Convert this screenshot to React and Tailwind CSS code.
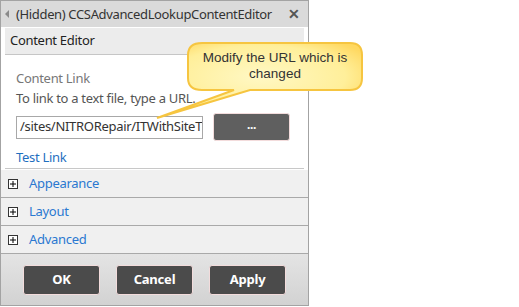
import React from "react";

export default function App() {
  const seg = { fontFamily: '"Noto Sans", "Open Sans", sans-serif' };
  return (
    <div className="relative w-[519px] h-[307px] bg-white overflow-hidden" style={seg}>
      <div className="w-[309px] h-[306px] border border-[#a3a3a3] flex flex-col bg-white">
        {/* title bar */}
        <div className="h-[26px] bg-[#dadada] flex items-center pl-[4px] pr-[8px] shrink-0">
          <span className="w-0 h-0 border-y-[4px] border-y-transparent border-r-[4px] border-r-[#8a8a8a] mr-[7px]" />
          <span className="text-[13px] text-[#333] tracking-[-0.35px] leading-none">(Hidden) CCSAdvancedLookupContentEditor</span>
          <span className="ml-auto text-[#555] text-[14px] font-bold leading-none">✕</span>
        </div>
        {/* body */}
        <div className="px-[4px] pt-[1px] pb-[1px] shrink-0">
          <div className="h-[27px] bg-[#ececec] border-b border-[#c6c6c6] flex items-center pl-[5px] text-[13px] text-[#222] tracking-[-0.3px]">
            Content Editor
          </div>
          <div className="pl-[11px] pt-[15px] border-b border-[#c8c8c8] h-[114px] tracking-[-0.3px]">
            <div className="text-[13px] text-[#777] leading-[17px]">Content Link</div>
            <div className="text-[13px] text-[#555] leading-[17px] mt-[3px]">To link to a text file, type a URL.</div>
            <div className="flex items-center mt-[6px]">
              <div className="w-[187px] h-[23px] border border-[#a8a8a8] flex items-center pl-[3px] text-[13px] text-[#333] overflow-hidden whitespace-nowrap">
                /sites/NITRORepair/ITWithSiteT
              </div>
              <div className="ml-[10px] w-[77px] h-[28px] rounded-[3px] border border-[#f3dcdc] bg-[#5f5f5f] flex items-center justify-center text-white text-[12px] font-bold leading-none pb-[4px]">
                ...
              </div>
            </div>
            <div className="mt-[8px] text-[13px] text-[#1f6fbf] leading-[17px]">Test Link</div>
          </div>
        </div>
        {/* accordion rows */}
        {["Appearance", "Layout", "Advanced"].map((t) => (
          <div
            key={t}
            className="h-[28px] bg-[#f0f0f0] border-b border-[#a9a9a9] flex items-center pl-[7px] shrink-0"
          >
            <span className="w-[10px] h-[10px] border border-[#333] bg-white flex items-center justify-center">
              <svg width="8" height="8" viewBox="0 0 8 8">
                <path d="M1 4H7M4 1V7" stroke="#000" strokeWidth="1" />
              </svg>
            </span>
            <span className="ml-[11px] text-[13px] text-[#2a78d0] tracking-[-0.3px]">{t}</span>
          </div>
        ))}
        {/* footer */}
        <div className="flex-1 bg-gradient-to-b from-[#e4e4e4] to-[#d2d2d2] flex items-center pl-[22px] gap-[16px]">
          {["OK", "Cancel", "Apply"].map((b) => (
            <div
              key={b}
              className="w-[77px] h-[30px] rounded-[3px] border border-[#f3dcdc] bg-[#4b4b4b] flex items-center justify-center text-white text-[13px] font-bold tracking-[-0.2px]"
            >
              {b}
            </div>
          ))}
        </div>
      </div>

      {/* callout */}
      <div className="absolute left-[150px] top-[40px] w-[220px] h-[82px] pointer-events-none">
        <svg width="220" height="82" viewBox="0 0 220 82" className="absolute left-0 top-0">
          <defs>
            <radialGradient id="yg" cx="50%" cy="45%" r="60%">
              <stop offset="0%" stopColor="#fff8c4" />
              <stop offset="70%" stopColor="#ffef9a" />
              <stop offset="100%" stopColor="#ffd860" />
            </radialGradient>
          </defs>
          <path
            d="M52 3 H200 Q212 3 212 15 V38 Q212 50 200 50 H100 L7 78 L84 50 H52 Q38 50 38 38 V15 Q38 3 52 3 Z"
            fill="url(#yg)"
            stroke="#f6c540"
            strokeWidth="2"
          />
        </svg>
        <div
          className="absolute left-[38px] top-[10px] w-[174px] text-center text-[13.5px] leading-[16px] text-[#333]"
          style={{ fontFamily: '"Liberation Sans", Arial, sans-serif' }}
        >
          Modify the URL which is
          <br />
          changed
        </div>
      </div>
    </div>
  );
}
